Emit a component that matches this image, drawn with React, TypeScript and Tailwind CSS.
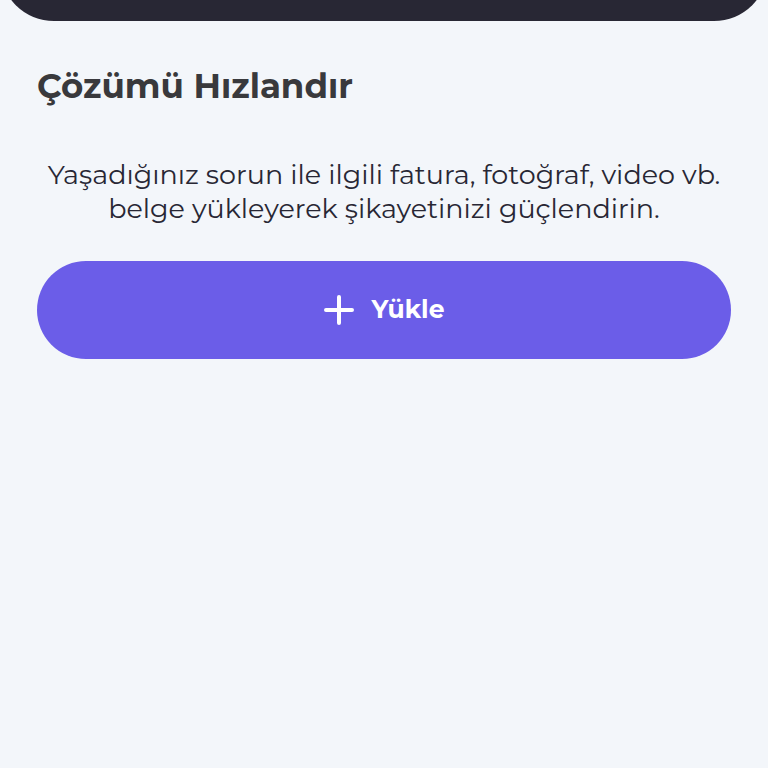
export default function App() {
  return (
    <main className="min-h-screen bg-[#f3f6fa] font-['Montserrat','Inter',sans-serif]">
      <header className="flex h-[21px] items-end overflow-hidden">
        <div className="h-[108px] w-full shrink-0 rounded-b-[54px] bg-[#282734]" />
      </header>
      <section className="px-[37px] pt-[43px]">
        <h1 className="text-[34px] leading-[44px] font-bold text-[#39393c]">Çözümü Hızlandır</h1>
        <p className="mt-[50px] text-center text-[27px] leading-[34px] text-[#282734]">
          Yaşadığınız sorun ile ilgili fatura, fotoğraf, video vb. belge yükleyerek şikayetinizi güçlendirin.
        </p>
        <button type="button" className="mt-[35px] flex h-[98px] w-full items-center justify-center gap-[18px] rounded-full bg-[#6b5de8] text-[25px] font-bold text-white">
          <svg className="size-[30px]" viewBox="0 0 30 30" fill="none" stroke="currentColor" strokeWidth="4" strokeLinecap="round" aria-hidden="true">
            <path d="M15 2v26M2 15h26" />
          </svg>
          Yükle
        </button>
      </section>
    </main>
  );
}
